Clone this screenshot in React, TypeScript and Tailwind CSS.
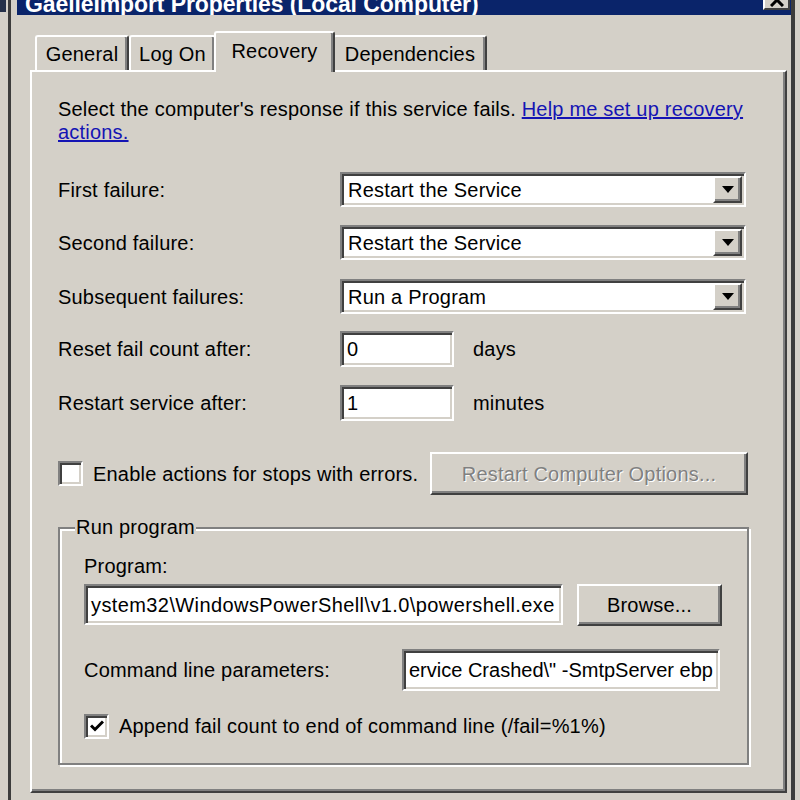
import React from 'react';

const sunken =
  'bg-white border-2 border-t-[#808080] border-l-[#808080] border-r-white border-b-white shadow-[inset_2px_2px_0_#404040,inset_-2px_-2px_0_#d4d0c8]';
const raised =
  'bg-[#d4d0c8] border-2 border-t-white border-l-white border-r-[#404040] border-b-[#404040] shadow-[inset_-2px_-2px_0_#808080]';

const Dropdown: React.FC<{ value: string }> = ({ value }) => (
  <div className={`flex h-[35px] w-[406px] items-center p-[2px] ${sunken}`}>
    <span className="flex-1 pl-[4px] leading-none">{value}</span>
    <div className={`flex h-full w-[29px] items-center justify-center ${raised}`}>
      <svg width="12" height="7" viewBox="0 0 12 7">
        <path d="M0 0h12L6 7z" fill="#000" />
      </svg>
    </div>
  </div>
);

const Field: React.FC<{ value: string; className: string }> = ({ value, className }) => (
  <div className={`flex items-center overflow-hidden whitespace-nowrap pl-[5px] ${sunken} ${className}`}>{value}</div>
);

const Check: React.FC<{ checked?: boolean }> = ({ checked }) => (
  <div className={`flex h-[25px] w-[25px] shrink-0 items-center justify-center ${sunken}`}>
    {checked && (
      <svg width="14" height="12" viewBox="0 0 14 12">
        <path d="M1 5.5l4 4L13 1.5" fill="none" stroke="#000" strokeWidth="3" />
      </svg>
    )}
  </div>
);

const Tab: React.FC<{ label: string; width: string; active?: boolean }> = ({ label, width, active }) => (
  <div
    className={`flex items-center justify-center rounded-t-[3px] border-l-2 border-t-2 border-r-2 border-l-white border-t-white border-r-[#404040] bg-[#d4d0c8] shadow-[inset_-2px_0_0_#808080] ${width} ${
      active ? 'relative z-10 -mx-[2px] -mb-[2px] h-[41px] pb-[3px]' : 'h-[35px]'
    }`}
  >
    {label}
  </div>
);

export default function App() {
  return (
    <div className="flex h-[800px] w-[800px] overflow-hidden bg-[#d4d0c8] font-['Liberation_Sans',Arial,sans-serif] text-[20px] tracking-[0.2px] text-black">
      <div className="w-[8px] shrink-0">
        <div className="h-[12px] w-[6px] bg-[#243049]" />
      </div>

      <div className="flex w-[787px] shrink-0 flex-col border-l-[3px] border-r-[4px] border-[#3c3c3c]">
        <div className="relative ml-[6px] h-[15px] overflow-hidden bg-[#0a246a] pl-[8px]">
          <div className="mt-[-7px] whitespace-nowrap text-[23px] font-bold leading-[23px] tracking-[-0.1px] text-white">
            GaelleImport Properties (Local Computer)
          </div>
          <div className="absolute right-[1px] top-0 flex h-[10px] w-[27px] items-end justify-center overflow-hidden border-b-2 border-l-2 border-r-2 border-l-white border-r-[#404040] border-b-[#404040] bg-[#d4d0c8]">
            <svg width="14" height="14" viewBox="0 0 14 14" className="mb-[1px]">
              <path d="M1 1l12 12M13 1L1 13" stroke="#000" strokeWidth="3" />
            </svg>
          </div>
        </div>

        <div className="ml-[19px] mt-[16px] flex w-[757px] flex-col">
          <div className="ml-[5px] flex items-end">
            <Tab label="General" width="w-[94px]" />
            <Tab label="Log On" width="w-[87px]" />
            <Tab label="Recovery" width="w-[121px]" active />
            <Tab label="Dependencies" width="w-[154px]" />
          </div>

          <div className="flex h-[723px] flex-col border-2 border-l-white border-t-white border-r-[#404040] border-b-[#404040] pl-[26px] pt-[26px] shadow-[inset_-2px_-2px_0_#808080]">
            <p className="leading-[23px]">
              <span className="whitespace-nowrap">Select the computer's response if this service fails. </span>
              <a className="text-[#1414b4] underline">
                <span className="whitespace-nowrap">Help me set up recovery</span>
                <br />
                actions.
              </a>
            </p>

            <div className="mt-[28px] flex items-center">
              <span className="w-[282px]">First failure:</span>
              <Dropdown value="Restart the Service" />
            </div>
            <div className="mt-[18px] flex items-center">
              <span className="w-[282px]">Second failure:</span>
              <Dropdown value="Restart the Service" />
            </div>
            <div className="mt-[19px] flex items-center">
              <span className="w-[282px]">Subsequent failures:</span>
              <Dropdown value="Run a Program" />
            </div>
            <div className="mt-[17px] flex items-center">
              <span className="w-[282px]">Reset fail count after:</span>
              <Field value="0" className="h-[36px] w-[114px]" />
              <span className="ml-[19px]">days</span>
            </div>
            <div className="mt-[18px] flex items-center">
              <span className="w-[282px]">Restart service after:</span>
              <Field value="1" className="h-[36px] w-[114px]" />
              <span className="ml-[19px]">minutes</span>
            </div>

            <div className="mt-[31px] flex items-center">
              <Check />
              <span className="ml-[10px] w-[337px] whitespace-nowrap">Enable actions for stops with errors.</span>
              <div className={`flex h-[43px] w-[318px] items-center justify-center text-[#808080] [text-shadow:1px_1px_0_#fff] ${raised}`}>
                Restart Computer Options...
              </div>
            </div>

            <fieldset className="mt-[21px] w-[690px] border-2 border-[#808080] pb-[22px] pl-[24px] pr-[25px] shadow-[inset_2px_2px_0_#fff,2px_2px_0_#fff]">
              <legend className="-ml-[9px] bg-[#d4d0c8] px-[1px] leading-[23px]">Run program</legend>
              <div className="mt-[16px] leading-[23px]">Program:</div>
              <div className="mt-[6px] flex items-start">
                <Field value="ystem32\WindowsPowerShell\v1.0\powershell.exe" className="h-[41px] w-[479px] tracking-[0.4px]" />
                <div className={`ml-[14px] flex h-[42px] w-[145px] items-center justify-center ${raised}`}>Browse...</div>
              </div>
              <div className="mt-[23px] flex items-center">
                <span className="w-[318px]">Command line parameters:</span>
                <Field value={'ervice Crashed\\" -SmtpServer ebp'} className="h-[42px] w-[318px] tracking-normal" />
              </div>
              <div className="mt-[20px] flex items-center">
                <Check checked />
                <span className="ml-[10px] whitespace-nowrap">Append fail count to end of command line (/fail=%1%)</span>
              </div>
            </fieldset>
          </div>
        </div>
      </div>
    </div>
  );
}
